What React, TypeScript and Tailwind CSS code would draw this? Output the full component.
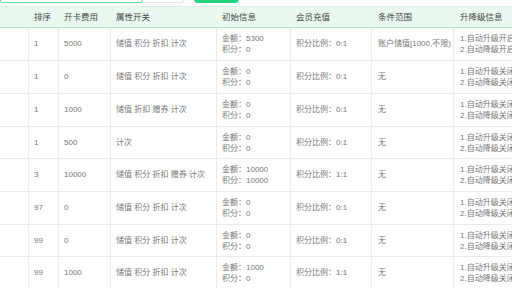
import React from "react";

type Row = {
  sort: string;
  fee: string;
  attrs: string;
  amount: string;
  points: string;
  ratio: string;
  range: string;
  up: string;
  down: string;
  h: string;
};

const rows: Row[] = [
  { sort: "1", fee: "5000", attrs: "储值 积分 折扣 计次", amount: "5300", points: "0", ratio: "0:1", range: "账户储值[1000,不限)", up: "开启", down: "开启", h: "h-[33px]" },
  { sort: "1", fee: "0", attrs: "储值 积分 折扣 计次", amount: "0", points: "0", ratio: "0:1", range: "无", up: "关闭", down: "关闭", h: "h-[33px]" },
  { sort: "1", fee: "1000", attrs: "储值 折扣 赠券 计次", amount: "0", points: "0", ratio: "0:1", range: "无", up: "关闭", down: "关闭", h: "h-[33px]" },
  { sort: "1", fee: "500", attrs: "计次", amount: "0", points: "0", ratio: "0:1", range: "无", up: "关闭", down: "关闭", h: "h-[32px]" },
  { sort: "3", fee: "10000", attrs: "储值 积分 折扣 赠券 计次", amount: "10000", points: "10000", ratio: "1:1", range: "无", up: "关闭", down: "关闭", h: "h-[33px]" },
  { sort: "97", fee: "0", attrs: "储值 积分 折扣 计次", amount: "0", points: "0", ratio: "0:1", range: "无", up: "关闭", down: "关闭", h: "h-[33px]" },
  { sort: "99", fee: "0", attrs: "储值 积分 折扣 计次", amount: "0", points: "0", ratio: "0:1", range: "无", up: "关闭", down: "关闭", h: "h-[32px]" },
  { sort: "99", fee: "1000", attrs: "储值 积分 折扣 计次", amount: "1000", points: "0", ratio: "1:1", range: "无", up: "关闭", down: "关闭", h: "h-[33px]" },
];

const cols = "grid grid-cols-[29px_30px_52px_106px_74px_81px_82px_140px]";
const cell = "flex items-center pl-[5px] border-r border-b border-[#ebebeb] overflow-hidden whitespace-nowrap";

export default function App() {
  return (
    <div className="w-[512px] h-[288px] overflow-hidden bg-white font-['Liberation_Sans','Noto_Sans_CJK_SC',sans-serif]">
      {/* toolbar, scrolled mostly out of view */}
      <div className="h-[6px] flex items-end pb-[3px] overflow-hidden">
        <div className="w-[143px] h-[24px] shrink-0 border border-[#62d89a] rounded-b-[2px]" />
        <div className="w-[41px] h-[24px] shrink-0 border border-l-0 border-[#e6e6e6] rounded-br-[2px]" />
        <div className="ml-[10px] w-[45px] h-[24px] shrink-0 bg-[#27d47f] rounded-b-[4px]" />
      </div>

      <div className="w-[594px]">
        <div className={`${cols} h-[22px] bg-[#e9f9ef] border-t border-[#dcf3e4] border-b border-b-[#b4e9c9] text-[8.5px] text-[#444]`}>
          <div />
          <div className="flex items-center pl-[5px]">排序</div>
          <div className="flex items-center pl-[5px]">开卡费用</div>
          <div className="flex items-center pl-[5px]">属性开关</div>
          <div className="flex items-center pl-[5px]">初始信息</div>
          <div className="flex items-center pl-[5px]">会员充值</div>
          <div className="flex items-center pl-[6px]">条件范围</div>
          <div className="flex items-center pl-[6px]">升降级信息</div>
        </div>

        {rows.map((r, i) => (
          <div key={i} className={`${cols} ${r.h} text-[8px] text-[#777]`}>
            <div className={cell} />
            <div className={cell}>{r.sort}</div>
            <div className={cell}>{r.fee}</div>
            <div className={cell}>{r.attrs}</div>
            <div className={`${cell} flex-col items-start justify-center leading-[11px]`}>
              <span>金额：{r.amount}</span>
              <span>积分：{r.points}</span>
            </div>
            <div className={cell}>积分比例：{r.ratio}</div>
            <div className={`${cell} pl-[6px]`}>{r.range}</div>
            <div className={`${cell} pl-[6px] flex-col items-start justify-center leading-[11px]`}>
              <span>1.自动升级{r.up}</span>
              <span>2.自动降级{r.down}</span>
            </div>
          </div>
        ))}
      </div>
    </div>
  );
}
